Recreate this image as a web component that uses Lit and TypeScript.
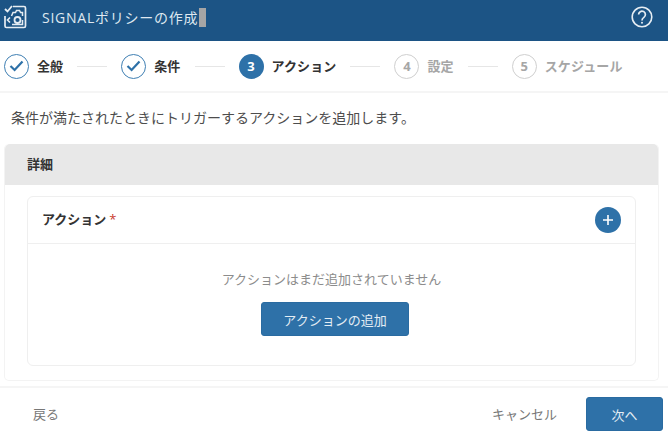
import { LitElement, html, css, nothing } from 'lit';
import { customElement } from 'lit/decorators.js';

type Step = { label: string; state: 'done' | 'active' | 'todo'; num: number };

const steps: Step[] = [
  { label: '全般', state: 'done', num: 1 },
  { label: '条件', state: 'done', num: 2 },
  { label: 'アクション', state: 'active', num: 3 },
  { label: '設定', state: 'todo', num: 4 },
  { label: 'スケジュール', state: 'todo', num: 5 },
];

@customElement('app-root')
export class AppRoot extends LitElement {
  static styles = css`
    :host {
      display: block;
      width: 668px;
      height: 444px;
      overflow: hidden;
      background: #fff;
      color: #333;
      font-family: 'Open Sans', 'Noto Sans CJK JP', sans-serif;
    }

    .header {
      display: flex;
      align-items: center;
      height: 41px;
      padding: 0 15px 0 4px;
      background: #1c5485;
      color: #dfe8f0;
      font-size: 14px;
    }

    .logo {
      display: block;
      margin-right: 15px;
      margin-top: -8px;
    }

    .title {
      display: flex;
      align-items: center;
      margin-top: -7px;
      letter-spacing: 0.75px;
    }

    .cursor {
      width: 7px;
      height: 19px;
      margin-left: 1px;
      background: #a5a5a5;
    }

    .help {
      display: block;
      margin-left: auto;
      margin-top: -7px;
    }

    .stepper {
      display: flex;
      align-items: center;
      height: 50px;
      padding: 0 0 0 4px;
      border-bottom: 2px solid #f5f5f5;
      box-sizing: content-box;
    }

    .step {
      display: flex;
      align-items: center;
      gap: 8px;
      font-size: 13px;
      font-weight: 700;
      letter-spacing: 0.12px;
      color: #333;
    }

    .step.todo {
      color: #a6a6a6;
    }

    .label {
      margin-bottom: 2px;
    }

    .badge {
      display: flex;
      align-items: center;
      justify-content: center;
      width: 25px;
      height: 25px;
      box-sizing: border-box;
      border-radius: 50%;
      font-size: 13px;
      font-weight: 700;
      font-family: 'Open Sans', sans-serif;
    }

    .done .badge {
      border: 1px solid #3f7fb3;
    }

    .active .badge {
      background: #2e71a8;
      color: #fff;
    }

    .todo .badge {
      border: 1px solid #cfcfcf;
      color: #a6a6a6;
    }

    .line {
      width: 30px;
      height: 1px;
      margin: 0 14px;
      background: #e6e6e6;
    }

    .intro {
      margin: 0;
      padding: 15px 0 0 11px;
      height: 36px;
      box-sizing: content-box;
      font-size: 14px;
      line-height: 20px;
      color: #4d4d4d;
    }

    .panel {
      margin: 0 9px 0 4px;
      height: 237px;
      box-sizing: border-box;
      border: 1px solid #f3f3f3;
      border-top: none;
      border-radius: 5px;
    }

    .panel-head {
      display: flex;
      align-items: center;
      height: 41px;
      padding: 0 0 3px 22px;
      box-sizing: border-box;
      background: #e8e8e8;
      border-radius: 5px 5px 0 0;
      font-size: 13px;
      font-weight: 700;
    }

    .card {
      margin: 11px 22px 0 22px;
      height: 170px;
      box-sizing: border-box;
      border: 1px solid #efefef;
      border-radius: 6px;
    }

    .card-head {
      display: flex;
      align-items: center;
      justify-content: space-between;
      height: 47px;
      padding: 0 14px 3px 14px;
      box-sizing: border-box;
      border-bottom: 1px solid #efefef;
      font-size: 13px;
      font-weight: 700;
    }

    .req {
      margin-left: 3px;
      color: #c93a2b;
      font-weight: 400;
    }

    .plus {
      display: block;
      margin-top: 3px;
    }

    .card-body {
      display: flex;
      flex-direction: column;
      align-items: center;
      padding-top: 25px;
    }

    .empty {
      font-size: 13px;
      line-height: 20px;
      color: #8c8c8c;
    }

    .btn {
      border: 1px solid #2a6ba1;
      border-radius: 3px;
      background: #2e71a8;
      color: #e4edf4;
      font: inherit;
      font-size: 13px;
      padding: 0;
    }

    .add {
      width: 148px;
      height: 34px;
      margin: 13px 0 0 7px;
    }

    .footer {
      display: flex;
      align-items: center;
      height: 52px;
      margin-top: 5px;
      padding: 0 5px 0 33px;
      border-top: 2px solid #f5f5f5;
      font-size: 13px;
      color: #777;
    }

    .footer span {
      margin-bottom: 2px;
    }

    .footer .cancel {
      margin-left: auto;
      margin-right: 29px;
    }

    .next {
      width: 77px;
      height: 34px;
    }
  `;

  private renderBadge(s: Step) {
    if (s.state === 'done') {
      return html`<svg width="15" height="12" viewBox="0 0 15 12" fill="none">
        <path d="M1.5 6 L5.6 10 L13.5 1.5" stroke="#2e71a8" stroke-width="2.2" />
      </svg>`;
    }
    return s.num;
  }

  render() {
    return html`
      <div class="header">
        <svg class="logo" width="23" height="24" viewBox="0 0 23 24" fill="none" stroke="#e6edf3" stroke-width="1.7">
          <path d="M9 1.5 H20 a1.5 1.5 0 0 1 1.5 1.5 V21 a1.5 1.5 0 0 1 -1.5 1.5 H2.5 a1.5 1.5 0 0 1 -1.5 -1.5 V11" />
          <path d="M1 4 L3.5 6.5 L8 1" stroke-width="1.8" />
          <path d="M7.5 11 L9 7.5 H11.5 L12.5 5.5 H15.5 L16.5 7.5 H18.5 V11" stroke-width="1.5" />
          <circle cx="13.5" cy="15" r="3" stroke-width="1.8" />
          <path d="M6 12.5 L3.5 15 L6 17.5" stroke-width="1.6" />
          <path d="M8 19.5 H18.5 V15" stroke-width="1.5" />
        </svg>
        <div class="title">SIGNALポリシーの作成<span class="cursor"></span></div>
        <svg class="help" width="22" height="22" viewBox="0 0 22 22" fill="none" stroke="#e6edf3">
          <circle cx="11" cy="11" r="9.8" stroke-width="1.6" />
          <path d="M7.6 8.6 a3.4 3.4 0 1 1 5.3 2.8 c-1.3 .9 -1.9 1.5 -1.9 3" stroke-width="1.7" />
          <circle cx="11" cy="16.8" r="1" fill="#e6edf3" stroke="none" />
        </svg>
      </div>

      <div class="stepper">
        ${steps.map(
          (s, i) => html`
            <div class="step ${s.state}">
              <span class="badge">${this.renderBadge(s)}</span>
              <span class="label">${s.label}</span>
            </div>
            ${i < steps.length - 1 ? html`<span class="line"></span>` : nothing}
          `,
        )}
      </div>

      <p class="intro">条件が満たされたときにトリガーするアクションを追加します。</p>

      <div class="panel">
        <div class="panel-head">詳細</div>
        <div class="card">
          <div class="card-head">
            <span>アクション<span class="req">*</span></span>
            <svg class="plus" width="26" height="26" viewBox="0 0 26 26">
              <circle cx="13" cy="13" r="13" fill="#2e71a8" />
              <path d="M13 8 V18 M8 13 H18" stroke="#fff" stroke-width="1.6" />
            </svg>
          </div>
          <div class="card-body">
            <div class="empty">アクションはまだ追加されていません</div>
            <button class="btn add">アクションの追加</button>
          </div>
        </div>
      </div>

      <div class="footer">
        <span>戻る</span>
        <span class="cancel">キャンセル</span>
        <button class="btn next">次へ</button>
      </div>
    `;
  }
}
